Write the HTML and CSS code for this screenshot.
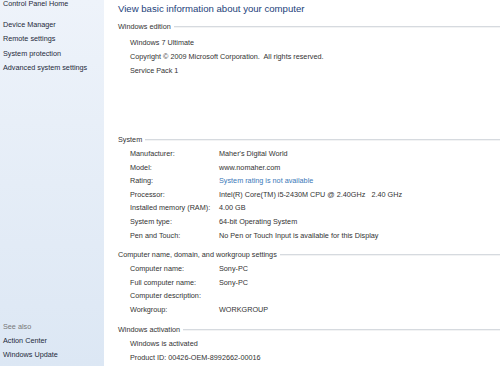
FILE: index.html
```html
<!DOCTYPE html>
<html>
  <head>
    <title>System</title>
    <link rel="stylesheet" href="styles.css">
  </head>
  <body>
    <div class="window">
      <aside class="sidebar">
        <a class="home">Control Panel Home</a>
        <ul class="tasks">
          <li>Device Manager</li>
          <li>Remote settings</li>
          <li>System protection</li>
          <li>Advanced system settings</li>
        </ul>
        <div class="see-also">
          <div class="see-title">See also</div>
          <ul class="tasks">
            <li>Action Center</li>
            <li>Windows Update</li>
            <li>Performance Information and Tools</li>
          </ul>
        </div>
      </aside>

      <main class="content">
        <h1>View basic information about your computer</h1>

        <section class="group edition">
          <h2>Windows edition</h2>
          <div class="line">Windows 7 Ultimate</div>
          <div class="line">Copyright &copy; 2009 Microsoft Corporation.&nbsp; All rights reserved.</div>
          <div class="line">Service Pack 1</div>
        </section>

        <section class="group system">
          <h2>System</h2>
          <div class="row"><span class="label">Manufacturer:</span><span>Maher's Digital World</span></div>
          <div class="row"><span class="label">Model:</span><span>www.nomaher.com</span></div>
          <div class="row"><span class="label">Rating:</span><span class="link">System rating is not available</span></div>
          <div class="row"><span class="label">Processor:</span><span>Intel(R) Core(TM) i5-2430M CPU @ 2.40GHz&nbsp;&nbsp; 2.40 GHz</span></div>
          <div class="row"><span class="label">Installed memory (RAM):</span><span>4.00 GB</span></div>
          <div class="row"><span class="label">System type:</span><span>64-bit Operating System</span></div>
          <div class="row"><span class="label">Pen and Touch:</span><span>No Pen or Touch Input is available for this Display</span></div>
        </section>

        <section class="group">
          <h2>Computer name, domain, and workgroup settings</h2>
          <div class="row"><span class="label">Computer name:</span><span>Sony-PC</span></div>
          <div class="row"><span class="label">Full computer name:</span><span>Sony-PC</span></div>
          <div class="row"><span class="label">Computer description:</span><span></span></div>
          <div class="row"><span class="label">Workgroup:</span><span>WORKGROUP</span></div>
        </section>

        <section class="group">
          <h2>Windows activation</h2>
          <div class="line">Windows is activated</div>
          <div class="line">Product ID: 00426-OEM-8992662-00016</div>
        </section>
      </main>
    </div>
  </body>
</html>
```

FILE: styles.css
```css
body {
  margin: 0;
  background: #fff;
  font-family: "Liberation Sans", Arial, sans-serif;
  font-size: 7.25px;
  color: #333;
  overflow: hidden;
}

.window {
  display: flex;
  height: 366px;
}

.sidebar {
  width: 104px;
  flex-shrink: 0;
  background: linear-gradient(#eef3fa, #dce7f4);
  padding-left: 3px;
  box-sizing: border-box;
}

.home {
  display: block;
  line-height: 14px;
  margin-top: -3px;
  margin-bottom: 7px;
  color: #1e2a3a;
}

.tasks {
  list-style: none;
  margin: 0;
  padding: 0;
}

.tasks li {
  line-height: 14.3px;
  color: #1e2a3a;
}

.see-also {
  margin-top: 245px;
}

.see-title {
  line-height: 14px;
  color: #777;
}

.content {
  flex: 1;
  padding-left: 14px;
}

h1 {
  margin: 2px 0 4px;
  font-size: 9.6px;
  font-weight: normal;
  line-height: 14px;
  color: #23417a;
}

.group {
  margin-bottom: 6px;
}

.group h2 {
  display: flex;
  align-items: center;
  margin: 0;
  font-size: 7.25px;
  font-weight: normal;
  line-height: 14px;
  color: #333;
}

.group h2::after {
  content: "";
  flex: 1;
  margin-left: 3px;
  border-top: 1px solid #d6dadf;
  border-bottom: 1px solid #f2f3f4;
}

.edition {
  margin-bottom: 55px;
}

.edition h2 {
  margin-bottom: 2px;
}

.line {
  padding-left: 12px;
  line-height: 14px;
}

.row {
  display: flex;
  padding-left: 12px;
  line-height: 13.6px;
}

.label {
  width: 89px;
  flex-shrink: 0;
}

.link {
  color: #3a78b8;
}
```
